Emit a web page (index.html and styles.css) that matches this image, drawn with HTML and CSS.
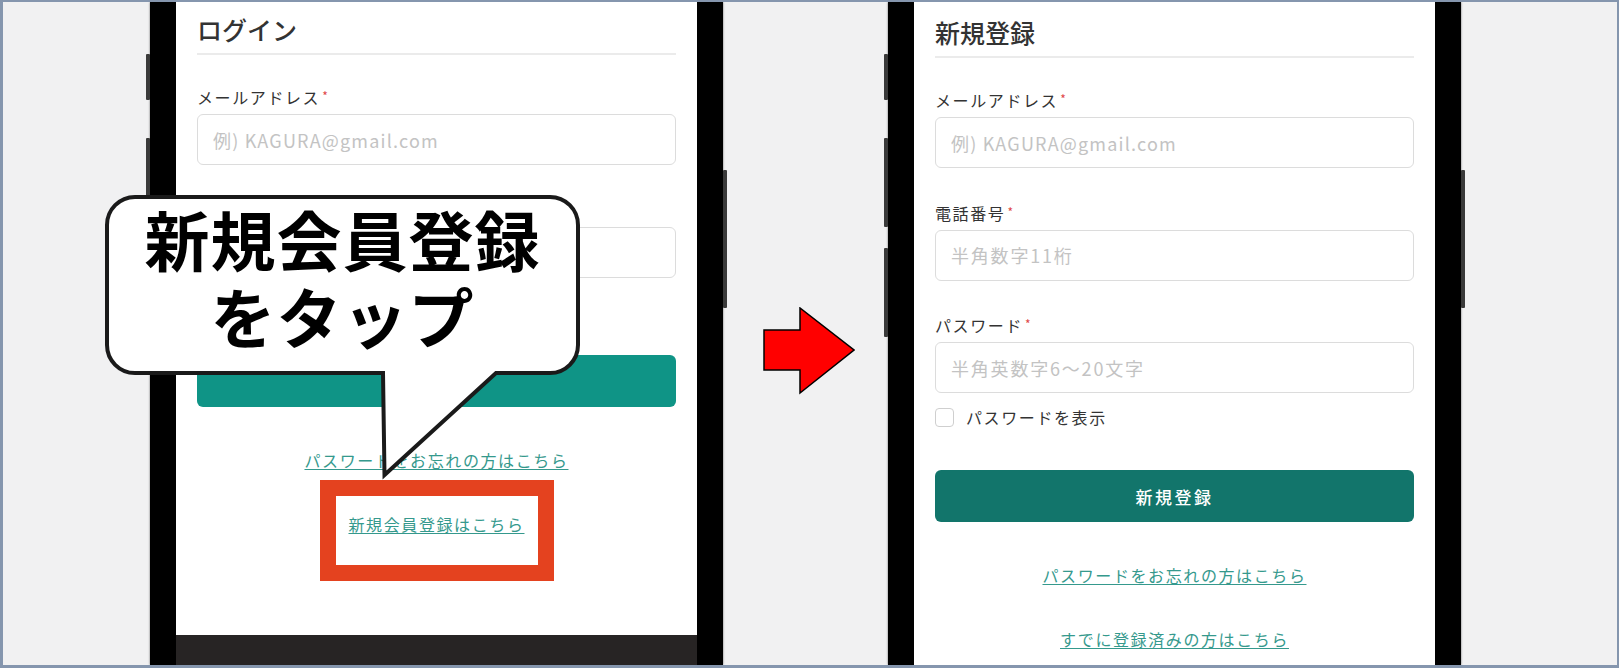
FILE: index.html
```html
<!DOCTYPE html>
<html lang="ja">
<head>
<meta charset="utf-8">
<title>新規会員登録の手順</title>
<link rel="stylesheet" href="styles.css">
</head>
<body>
<div class="frame">
  <div class="phone">
    <span class="side side--l1"></span>
    <span class="side side--l2"></span>
    <span class="side side--l3"></span>
    <span class="side side--r"></span>
    <div class="screen screen--login">
      <h2 class="title">ログイン</h2>
      <div class="field">
        <label class="field-label">メールアドレス<span class="req">*</span></label>
        <input class="field-input field-input--mail" type="text" placeholder="例) KAGURA@gmail.com">
      </div>
      <div class="field field--last">
        <label class="field-label">パスワード<span class="req">*</span></label>
        <input class="field-input" type="password" placeholder="半角英数字6〜20文字">
      </div>
      <label class="check"><input class="check-box" type="checkbox"><span>パスワードを表示</span></label>
      <button class="submit submit--login">ログイン</button>
      <a class="link">パスワードをお忘れの方はこちら</a>
      <a class="link">新規会員登録はこちら</a>
      <div class="footer"></div>
    </div>
    <div class="highlight"></div>
  </div>

  <div class="arrow-slot">
    <svg class="arrow" width="92" height="88" viewBox="0 0 92 88">
      <polygon points="1,23 37,23 37,1 91,43 37,86 37,63 1,63" fill="#ff0000" stroke="#000" stroke-width="1.5" stroke-linejoin="miter"/>
    </svg>
  </div>

  <div class="phone">
    <span class="side side--l1"></span>
    <span class="side side--l2"></span>
    <span class="side side--l3"></span>
    <span class="side side--r"></span>
    <div class="screen">
      <h2 class="title">新規登録</h2>
      <div class="field">
        <label class="field-label">メールアドレス<span class="req">*</span></label>
        <input class="field-input field-input--mail" type="text" placeholder="例) KAGURA@gmail.com">
      </div>
      <div class="field">
        <label class="field-label">電話番号<span class="req">*</span></label>
        <input class="field-input" type="text" placeholder="半角数字11桁">
      </div>
      <div class="field field--last">
        <label class="field-label">パスワード<span class="req">*</span></label>
        <input class="field-input" type="password" placeholder="半角英数字6〜20文字">
      </div>
      <label class="check"><input class="check-box" type="checkbox"><span>パスワードを表示</span></label>
      <button class="submit">新規登録</button>
      <a class="link">パスワードをお忘れの方はこちら</a>
      <a class="link">すでに登録済みの方はこちら</a>
    </div>
  </div>

  <div class="callout">
    <svg class="callout-shape" width="485" height="295" viewBox="0 0 485 295">
      <path d="M35 7 H450 A28 28 0 0 1 478 35 V155 A28 28 0 0 1 450 183 H396 L284.5 285 L283 183 H35 A28 28 0 0 1 7 155 V35 A28 28 0 0 1 35 7 Z" fill="#fff" stroke="#1a1a1a" stroke-width="4" stroke-linejoin="miter"/>
    </svg>
    <div class="callout-text">新規会員登録<br>をタップ</div>
  </div>
</div>
</body>
</html>
```
FILE: styles.css
```css
body {
  margin: 0;
  font-family: "Noto Sans CJK JP", "Noto Sans", sans-serif;
}

.frame {
  position: relative;
  box-sizing: border-box;
  width: 1619px;
  height: 668px;
  border: 2px solid #8596ae;
  border-left-width: 3px;
  border-bottom-width: 3px;
  background: #f1f1f2;
  display: flex;
  padding-left: 147px;
  overflow: hidden;
}

.phone {
  position: relative;
  box-sizing: border-box;
  flex-shrink: 0;
  width: 573px;
  height: 100%;
  padding: 0 26px;
  background: #000;
  box-shadow: 0 0 2px rgba(0, 0, 0, 0.55);
}

.side {
  position: absolute;
  width: 4px;
  background: #3a3a3a;
  border-radius: 1px;
}
.side--l1 { left: -4px; top: 52px; height: 46px; }
.side--l2 { left: -4px; top: 136px; height: 89px; }
.side--l3 { left: -4px; top: 246px; height: 89px; }
.side--r { right: -4px; top: 168px; height: 138px; }

.screen {
  box-sizing: border-box;
  height: 100%;
  background: #fff;
  padding: 12px 21px 0;
  display: flex;
  flex-direction: column;
}
.screen--login { padding-top: 9px; }

.title {
  margin: 0 0 30px;
  font-size: 25px;
  font-weight: 500;
  line-height: 36px;
  color: #333;
  padding-bottom: 6px;
  border-bottom: 2px solid #ebebeb;
}

.field {
  display: flex;
  flex-direction: column;
  margin-bottom: 32.5px;
}
.field--last { margin-bottom: 0; }

.field-label {
  height: 24px;
  font-size: 16px;
  line-height: 24px;
  letter-spacing: 0.1em;
  color: #333;
  margin-bottom: 5px;
}

.req {
  color: #e04646;
  font-size: 12px;
  line-height: 21px;
  vertical-align: top;
  margin-left: 2px;
}

.field-input {
  box-sizing: border-box;
  height: 51px;
  border: 1.5px solid #dcdcdc;
  border-radius: 6px;
  padding: 0 15px;
  font-family: inherit;
  font-size: 18px;
  letter-spacing: 0.1em;
  color: #333;
  outline: none;
  background: #fff;
}
.field-input--mail { letter-spacing: 1.2px; }
.field-input::placeholder { color: #c3c3c3; }

.check {
  display: flex;
  align-items: center;
  gap: 12px;
  margin-top: 13px;
  height: 22px;
  font-size: 16px;
  letter-spacing: 0.1em;
  color: #333;
}
.check-box {
  appearance: none;
  -webkit-appearance: none;
  box-sizing: border-box;
  margin: 0;
  width: 19px;
  height: 19px;
  border: 1.5px solid #cfcfcf;
  border-radius: 4px;
  background: #fff;
}

.submit {
  flex-shrink: 0;
  margin-top: 42px;
  height: 52px;
  padding: 0;
  border: 0;
  border-radius: 6px;
  background: #12756b;
  color: #fff;
  font-family: inherit;
  font-size: 17px;
  font-weight: 500;
  letter-spacing: 0.15em;
}
.submit--login { background: #0f9486; }

.link {
  display: block;
  align-self: center;
  margin-top: 41px;
  font-size: 16px;
  line-height: 24px;
  letter-spacing: 0.1em;
  color: #35998d;
  text-decoration: underline;
  text-underline-offset: 2px;
}
.link + .link { margin-top: 40px; }

.footer {
  margin: auto -21px 0;
  height: 30px;
  background: #272424;
}

.highlight {
  position: absolute;
  left: 170px;
  top: 478px;
  box-sizing: border-box;
  width: 234px;
  height: 101px;
  border: 16px solid #e4421f;
}

.arrow-slot {
  box-sizing: border-box;
  flex-shrink: 0;
  width: 165px;
  padding: 305px 0 0 40px;
}
.arrow { display: block; }

.callout {
  position: absolute;
  left: 97px;
  top: 188px;
  width: 485px;
  height: 295px;
}
.callout-shape {
  display: block;
}
.callout-text {
  position: absolute;
  left: 5px;
  top: 10px;
  width: 475px;
  text-align: center;
  font-size: 65px;
  line-height: 77px;
  font-weight: 700;
  letter-spacing: 1px;
  color: #000;
}
```
